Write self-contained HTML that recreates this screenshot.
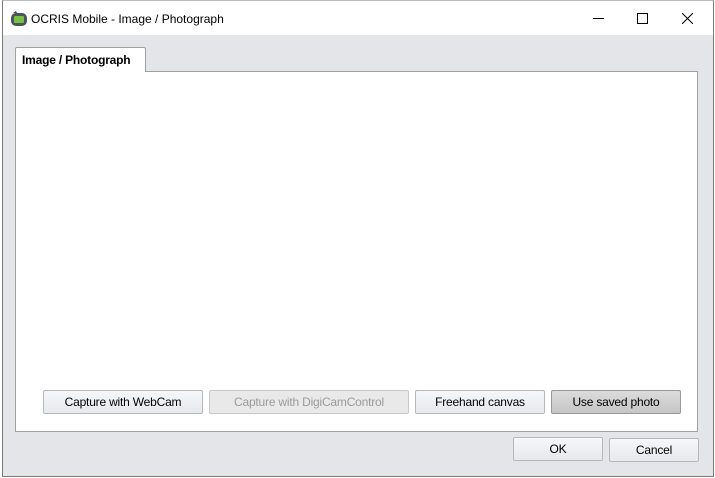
<!DOCTYPE html>
<html><head><style>
body{margin:0;width:715px;height:478px;background:#fff;position:relative;overflow:hidden;font-family:"Segoe UI","Liberation Sans",sans-serif;font-size:12px;color:#000}
.win{position:absolute;left:2px;top:0;width:710px;height:475px;border:1px solid #7a7a7a;border-top:1px solid #bbb;background:#e3e5e8}
.title{position:absolute;left:0;top:0;right:0;height:34px;background:#fff}
.title .t{position:absolute;left:28px;top:11px;font-size:12px}
.panel{position:absolute;left:12px;top:70px;width:681px;height:359px;background:#fff;border:1px solid #a0a0a0}
.tab{position:absolute;left:12px;top:46px;width:131px;height:25px;background:#fff;border:1px solid #a0a0a0;border-bottom:none;border-radius:2px 2px 0 0;font-weight:bold;font-size:12px;line-height:25px;padding-left:6px;box-sizing:border-box;z-index:2;letter-spacing:-0.2px}
.btn{position:absolute;height:24px;box-sizing:border-box;border:1px solid #b4b8bd;border-radius:2px;background:linear-gradient(#f5f7f9,#e6e9ed);text-align:center;line-height:22px;font-size:12px;letter-spacing:-0.2px}
.dis{color:#9a9a9a;background:#e9e9e9;border-color:#c8c8c8}
.sel{background:linear-gradient(#dcdcdc,#c6c6c6);border-color:#999}
</style></head><body>
<div class="win">
 <div class="title">
  <svg style="position:absolute;left:7px;top:10px" width="18" height="16" viewBox="0 0 18 16"><path d="M3 2 L6 0 L7 2 Z" fill="#444"/><rect x="1" y="2" width="16" height="13" rx="5" fill="#4a555b"/><rect x="4" y="5" width="10" height="7" rx="1" fill="#79c043"/></svg>
  <div class="t">OCRIS Mobile - Image / Photograph</div>
  <div style="position:absolute;left:590px;top:17px;width:11px;height:1px;background:#000"></div>
  <div style="position:absolute;left:634px;top:12px;width:9px;height:9px;border:1px solid #000"></div>
  <svg style="position:absolute;left:679px;top:12px" width="11" height="11"><path d="M0 0L11 11M11 0L0 11" stroke="#000" stroke-width="1"/></svg>
 </div>
 <div class="tab">Image / Photograph</div>
 <div class="panel"></div>
 <div class="btn" style="left:40px;top:389px;width:160px">Capture with WebCam</div>
 <div class="btn dis" style="left:206px;top:389px;width:200px">Capture with DigiCamControl</div>
 <div class="btn" style="left:412px;top:389px;width:130px">Freehand canvas</div>
 <div class="btn sel" style="left:548px;top:389px;width:130px">Use saved photo</div>
 <div class="btn" style="left:510px;top:436px;width:90px">OK</div>
 <div class="btn" style="left:606px;top:437px;width:90px">Cancel</div>
</div>
</body></html>
